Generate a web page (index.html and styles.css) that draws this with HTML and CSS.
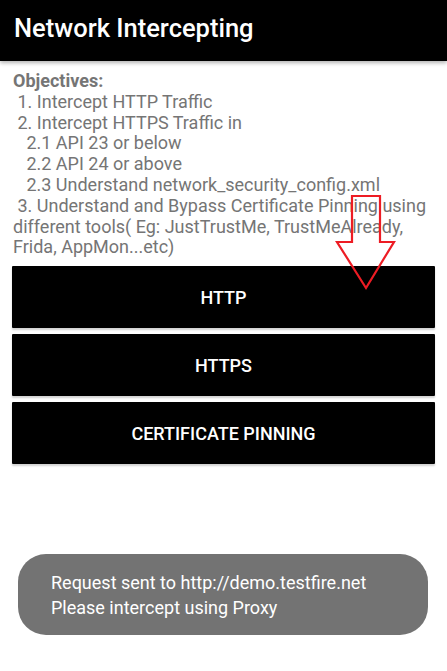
FILE: index.html
```html
<!DOCTYPE html>
<html>
<head>
<meta charset="utf-8">
<link rel="stylesheet" href="styles.css">
</head>
<body>
<div class="screen">
  <header class="appbar"><h1 class="title">Network Intercepting</h1></header>
  <main class="content">
    <div class="objectives"><b>Objectives:</b>
 1. Intercept HTTP Traffic
 2. Intercept HTTPS Traffic in
   2.1 API 23 or below
   2.2 API 24 or above
   2.3 Understand network_security_config.xml
 3. Understand and Bypass Certificate Pinning using
different tools( Eg: JustTrustMe, TrustMeAlready,
Frida, AppMon...etc)</div>
    <div class="buttons">
      <button class="btn">HTTP</button>
      <button class="btn">HTTPS</button>
      <button class="btn">CERTIFICATE PINNING</button>
    </div>
  </main>
  <svg class="arrow" width="447" height="671" viewBox="0 0 447 671">
    <polygon points="352,196 380,196 380,242 394,242 366,288 337,242 352,242" fill="none" stroke="#ed1c24" stroke-width="2.2"/>
  </svg>
  <div class="toast">Request sent to http://demo.testfire.net<br>Please intercept using Proxy</div>
</div>
</body>
</html>
```
FILE: styles.css
```css
html, body { margin: 0; padding: 0; background: #fff; }
.screen { position: relative; width: 447px; height: 671px; overflow: hidden; font-family: Roboto, "Noto Sans", sans-serif; }
.appbar { height: 61px; background: #000; display: flex; align-items: center; padding: 0 14px; box-shadow: 0 2px 4px rgba(0,0,0,0.3); position: relative; z-index: 1; }
.title { margin: 0; color: #fff; font-size: 25.5px; font-weight: 500; letter-spacing: 0; padding-bottom: 6px; }
.content { padding: 10px 12px 0 12px; }
.objectives { white-space: pre; color: #757575; font-size: 18px; line-height: 20.8px; padding-left: 1px; }
.objectives b { font-weight: 700; }
.buttons { display: flex; flex-direction: column; gap: 6px; margin-top: 8px; }
.btn { height: 62px; width: 100%; background: #000; color: #fff; border: none; border-radius: 1px; font-family: Roboto, sans-serif; font-size: 18px; font-weight: 500; box-shadow: 0 2px 2px rgba(0,0,0,0.18); padding: 0; }
.arrow { position: absolute; left: 0; top: 0; pointer-events: none; }
.toast { position: absolute; left: 18px; top: 554px; width: 410px; height: 81px; box-sizing: border-box; padding: 16px 0 0 33px; background: #737373; border-radius: 28px; color: #fff; font-size: 18px; line-height: 25px; }
```
